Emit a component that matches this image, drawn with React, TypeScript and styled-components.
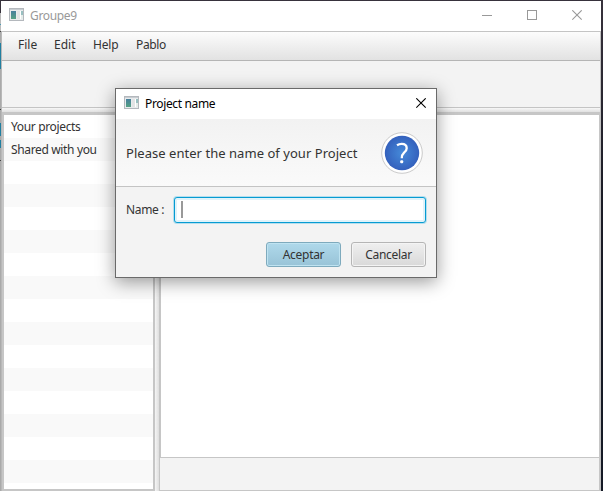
import React from "react";
import styled, { createGlobalStyle } from "styled-components";

const GlobalStyle = createGlobalStyle`
  * { box-sizing: border-box; }
  html, body, #root { margin: 0; width: 603px; height: 491px; overflow: hidden; }
  body { font: 12px/16px "Noto Sans", "Open Sans", sans-serif; color: #333; }
`;

const Desktop = styled.div`
  position: relative;
  width: 603px;
  height: 491px;
  padding: 1px 2px 0 1px;
  background:
    linear-gradient(to bottom, #37323c 0 13px, #bbb 13px 24px, #4a9ab4 24px 25px, #bbb 25px 31px, #444 31px 32px, #aaa 32px 43px, #217fa0 43px 69px, #aaa 69px 109px, #444 109px 110px, #aaa 110px 123px, #217fa0 123px 136px, #aaa 136px 140px, #217fa0 140px 148px, #aaa 148px 160px, #444 160px 161px, #aaa 161px) 0 0 / 1px 100% no-repeat,
    linear-gradient(to bottom, #37323c, #1b1c26 40%, #141925);
`;

const Window = styled.div`
  display: flex;
  flex-direction: column;
  width: 600px;
  height: 490px;
  background: #f3f3f3;
`;

const TitleBar = styled.header`
  display: flex;
  align-items: center;
  flex: none;
  height: 30px;
  padding-left: 8px;
  background: #fff;
  color: #999;
`;

const DialogTitleBar = styled(TitleBar)`
  padding-right: 9px;
  color: #000;
`;

const Label = styled.span<{ $size?: number; $track?: number; $width?: number }>`
  display: block;
  flex: none;
  white-space: nowrap;
  font-size: ${(p) => p.$size ?? 12}px;
  letter-spacing: ${(p) => p.$track ?? 0}px;
  width: ${(p) => (p.$width ? `${p.$width}px` : "auto")};
`;

const Title = styled(Label)`
  flex: 1;
  margin-left: 6px;
`;

const WindowControls = styled.div`
  display: flex;
  align-items: center;
  gap: 34px;
  margin: 0 18px 1px 0;
  svg { display: block; margin: 0; }
`;

const ClientArea = styled.div`
  display: flex;
  flex-direction: column;
  flex: 1;
  min-height: 0;
  border-top: 1px solid #c4c4c4;
  border-left: 1px solid #b8b8b8;
  border-right: 1px solid #c2c2c2;
`;

const MenuBar = styled.nav`
  display: flex;
  align-items: center;
  flex: none;
  height: 29px;
  padding: 0 0 2px 16px;
  background: linear-gradient(#fcfcfc, #e2e2e2);
  border-bottom: 1px solid #b5b5b5;
`;

const Toolbar = styled.div`
  flex: none;
  height: 47px;
  border-bottom: 1px solid #c4c4c4;
`;

const HorizontalDivider = styled.div`
  flex: none;
  height: 4px;
  background: linear-gradient(#f7f7f7, #e0e0e0);
`;

const SplitPane = styled.div`
  display: flex;
  flex: 1;
  min-height: 0;
`;

const ProjectList = styled.ul`
  width: 153px;
  margin: 0;
  padding: 0;
  list-style: none;
  overflow: hidden;
  border: solid #c6c6c6;
  border-width: 3px 2px 2px 2px;
`;

const ProjectRow = styled.li`
  height: 23px;
  padding: 4px 7px 0;
  background: #fff;
  &:nth-child(even) { background: #f9f9f9; }
`;

const VerticalDivider = styled.div`
  width: 4px;
  border-top: 3px solid #c6c6c6;
  background: linear-gradient(to right, #f5f5f5, #dedede);
`;

const Workspace = styled.main`
  display: flex;
  flex-direction: column;
  flex: 1;
  border: solid #c6c6c6;
  border-width: 3px 1px 1px 1px;
`;

const Canvas = styled.div`
  flex: 1;
  background: #fff;
  border-left: 1px solid #c6c6c6;
  border-bottom: 1px solid #c6c6c6;
`;

const StatusPanel = styled.div`
  height: 32px;
  background: #f3f3f3;
`;

const Dialog = styled.section`
  position: absolute;
  left: 115px;
  top: 88px;
  width: 322px;
  height: 190px;
  background: #f3f3f3;
  border: 1px solid #6a6a6a;
  box-shadow: 0 4px 17px rgba(0, 0, 0, 0.4);
`;

const DialogHeader = styled.div`
  display: flex;
  align-items: center;
  justify-content: space-between;
  height: 68px;
  padding: 0 13px 0 10px;
  background: linear-gradient(#f2f2f2, #fafafa);
  border-bottom: 1px solid #c4c4c4;
`;

const FieldRow = styled.label`
  display: flex;
  align-items: center;
  padding: 10px 10px 0;
`;

const TextField = styled.div`
  width: 253px;
  height: 26px;
  padding: 3px 0 0 6px;
  background: #fff;
  border: 1px solid #069bd2;
  border-radius: 3px;
  box-shadow: inset 0 0 0 2px #e0f3fa, 0 0 0 1px #b5deed;
`;

const Caret = styled.div`
  width: 2px;
  height: 17px;
  background: #999;
`;

const ButtonRow = styled.div`
  display: flex;
  gap: 10px;
  padding: 19px 0 0 150px;
`;

const DialogButton = styled.button<{ $primary?: boolean }>`
  display: flex;
  align-items: center;
  justify-content: center;
  width: 75px;
  height: 25px;
  padding: 1px 0 0;
  font: inherit;
  letter-spacing: -0.3px;
  color: #333;
  border: 1px solid ${(p) => (p.$primary ? "#7eaabd" : "#b5b5b5")};
  border-radius: 3px;
  background: ${(p) => (p.$primary ? "linear-gradient(#afd9eb, #98c3d7)" : "linear-gradient(#efefef, #d9d9d9)")};
  box-shadow: inset 0 0 0 1px ${(p) => (p.$primary ? "#bfe3f1" : "#f4f4f4")};
`;

const AppIconSvg = styled.svg`
  flex: none;
  margin-bottom: 3px;
`;

const CloseIconSvg = styled.svg`
  flex: none;
  margin-bottom: 1px;
`;

const AppIcon = () => (
  <AppIconSvg width="15" height="13" viewBox="0 0 15 13" shapeRendering="crispEdges">
    <defs>
      <linearGradient id="screen" x1="0" y1="0" x2="0" y2="1">
        <stop stopColor="#477f9d" />
        <stop offset="1" stopColor="#55a184" />
      </linearGradient>
    </defs>
    <rect x=".5" y=".5" width="14" height="12" fill="#e9ebed" stroke="#b4b8bd" />
    <path d="M1 1.5h13" stroke="#c8cdd1" />
    <rect x="2" y="3" width="5" height="8" fill="url(#screen)" />
    <rect x="8" y="3" width="3" height="8" fill="#e2e4e5" />
    <rect x="11" y="3" width="1" height="8" fill="#fff" />
    <rect x="12" y="3" width="2" height="4" fill="#98bfc0" />
    <rect x="12" y="7" width="2" height="4" fill="#e5ece9" />
  </AppIconSvg>
);

const CloseIcon = ({ color }: { color: string }) => (
  <CloseIconSvg width="11" height="11" viewBox="0 0 11 11" fill="none" stroke={color} strokeWidth="1.1">
    <path d="M.3.3l9.400 9.400M9.700.3l-9.400 9.400" />
  </CloseIconSvg>
);

const QuestionIcon = () => (
  <svg width="42" height="42" viewBox="0 0 42 42">
    <defs>
      <radialGradient id="blue">
        <stop stopColor="#458ad9" />
        <stop offset="1" stopColor="#3461bd" />
      </radialGradient>
    </defs>
    <circle cx="21" cy="21" r="20.300" fill="#fff" stroke="#cacaca" />
    <circle cx="21" cy="21" r="17.200" fill="url(#blue)" />
    <path d="M16 13.200Q18.200 11.800 20.600 11.800C24 11.800 25.700 13.600 25.700 16.200C25.700 18.200 24.600 19.500 23.100 20.700C21.400 22.200 20.800 23.200 20.800 26.300" fill="none" stroke="#fff" strokeWidth="2.300" />
    <rect x="19.200" y="28.300" width="3" height="3" rx="1" fill="#fff" />
  </svg>
);

const projects = ["Your projects", "Shared with you", ...Array(15).fill("")];

export default function App() {
  return (
    <>
      <GlobalStyle />
      <Desktop>
        <Window>
          <TitleBar>
            <AppIcon />
            <Title $track={-0.35}>Groupe9</Title>
            <WindowControls>
              <svg width="11" height="11"><path d="M0 5.500h10" stroke="#999" /></svg>
              <svg width="11" height="11"><rect x=".5" y=".5" width="9" height="9" fill="none" stroke="#999" /></svg>
              <CloseIcon color="#999" />
            </WindowControls>
          </TitleBar>
          <ClientArea>
            <MenuBar>
              <Label $width={36}>File</Label>
              <Label $width={39}>Edit</Label>
              <Label $width={43} $track={-0.2}>Help</Label>
              <Label $track={-0.35}>Pablo</Label>
            </MenuBar>
            <Toolbar />
            <HorizontalDivider />
            <SplitPane>
              <ProjectList>
                {projects.map((name, index) => (
                  <ProjectRow key={index}><Label $track={-0.35}>{name}</Label></ProjectRow>
                ))}
              </ProjectList>
              <VerticalDivider />
              <Workspace><Canvas /><StatusPanel /></Workspace>
            </SplitPane>
          </ClientArea>
        </Window>
        <Dialog>
          <DialogTitleBar>
            <AppIcon />
            <Title $track={-0.35}>Project name</Title>
            <CloseIcon color="#000" />
          </DialogTitleBar>
          <DialogHeader>
            <Label $size={13} $track={0.04}>Please enter the name of your Project</Label>
            <QuestionIcon />
          </DialogHeader>
          <FieldRow>
            <Label $width={48} $track={-0.35}>Name :</Label>
            <TextField><Caret /></TextField>
          </FieldRow>
          <ButtonRow>
            <DialogButton $primary>Aceptar</DialogButton>
            <DialogButton>Cancelar</DialogButton>
          </ButtonRow>
        </Dialog>
      </Desktop>
    </>
  );
}
